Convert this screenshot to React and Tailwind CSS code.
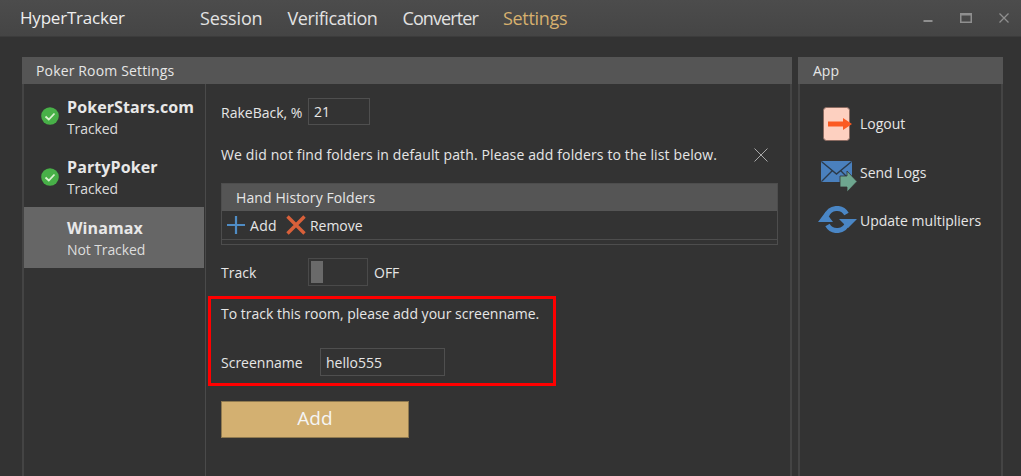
import React from "react";

const font = { fontFamily: '"Open Sans", "Noto Sans", sans-serif' };

function Check() {
  return (
    <svg width="18" height="18" viewBox="0 0 18 18" className="shrink-0">
      <circle cx="9" cy="9" r="8.800" fill="#48b048" />
      <path d="M4.5 9.5 L7.8 12.5 L13.5 6.5" fill="none" stroke="#d9f2d0" strokeWidth="1.8" />
    </svg>
  );
}

function Room({ name, status, tracked, selected, h }) {
  return (
    <div className={`flex items-center ${selected ? "bg-[#666666] w-[180px] h-[61px] pt-[4px]" : "w-full"} ${h || ""}`}>
      <div className="w-[43px] pl-[17px] shrink-0 flex -translate-y-[2px]">
        {tracked && <Check />}
      </div>
      <div className="flex flex-col">
        <span className="text-[16px] leading-[21px] font-bold text-[#e8e8e8] tracking-[0.1px]">{name}</span>
        <span className="text-[14px] leading-[22px] text-[#dddddd] tracking-[-0.1px]">{status}</span>
      </div>
    </div>
  );
}

function ActionRow({ icon, label, h, pad }) {
  return (
    <div className={`flex items-center ${h}`}>
      <div className={`w-[60px] flex justify-end shrink-0 ${pad}`}>{icon}</div>
      <span className="text-[14px] text-[#e6e6e6]">{label}</span>
    </div>
  );
}

export default function App() {
  return (
    <div style={font} className="w-[1021px] h-[476px] bg-[#333333] flex flex-col overflow-hidden">
      <header className="h-[37px] shrink-0 bg-gradient-to-b from-[#4c4c4c] to-[#454545] flex items-center pl-[20px] border-b border-[#3c3c3c]">
        <span className="text-[17px] text-[#eeeeee] w-[180px] tracking-[-0.2px]">HyperTracker</span>
        <nav className="flex gap-[25px] text-[18px] text-[#e2e2e2]">
          <span className="tracking-[-0.15px]">Session</span>
          <span className="tracking-[-0.4px]">Verification</span>
          <span className="tracking-[-0.9px]">Converter</span>
          <span className="text-[#d6b06e] tracking-[-0.3px]">Settings</span>
        </nav>
        <div className="ml-auto flex items-center text-[#8f8f8f]">
          <svg width="10" height="10" viewBox="0 0 10 10" className="mr-[27px] mt-[2px]"><rect x="0.5" y="6" width="9" height="2" fill="#8f8f8f" /></svg>
          <svg width="12" height="10" viewBox="0 0 12 10" className="mr-[27px]"><rect x="0.75" y="0.75" width="10.5" height="8.5" fill="none" stroke="#8f8f8f" strokeWidth="1.5" /><rect x="0" y="0" width="12" height="2.5" fill="#8f8f8f" /></svg>
          <svg width="10" height="10" viewBox="0 0 10 10" className="mr-[12px]"><path d="M0.5 0.5 L9.5 9.5 M9.5 0.5 L0.5 9.5" stroke="#8f8f8f" strokeWidth="1.3" /></svg>
        </div>
      </header>

      <main className="flex-1 flex gap-[6px] pl-[22px] pt-[20px] min-h-0">
        <section className="w-[770px] flex flex-col border-x-2 border-[#444444]">
          <div className="h-[27px] -mx-[2px] bg-[#555555] pl-[14px] flex items-center text-[14px] text-[#e6e6e6] tracking-[0.15px] shrink-0">
            Poker Room Settings
          </div>
          <div className="flex-1 flex min-h-0">
            <div className="w-[181px] shrink-0 border-r border-[#4a4a4a] flex flex-col pt-[4px] box-content">
              <Room name="PokerStars.com" status="Tracked" tracked h="h-[60px]" />
              <Room name="PartyPoker" status="Tracked" tracked h="h-[59px] pt-[2px]" />
              <Room name="Winamax" status="Not Tracked" selected />
            </div>
            <div className="flex-1 flex flex-col pl-[15px] text-[14px] text-[#e6e6e6]">
              <div className="flex items-center mt-[14px] h-[27px]">
                <span className="w-[87px] pt-[1px]">RakeBack, %</span>
                <div className="w-[62px] h-[27px] border border-[#4f4f4f] flex items-center pl-[5px]">21</div>
              </div>
              <div className="flex items-center h-[20px] mt-[20px] w-[547px] justify-between">
                <span className="tracking-[0.13px] -translate-y-[1px]">We did not find folders in default path. Please add folders to the list below.</span>
                <svg width="14" height="14" viewBox="0 0 14 14" className="shrink-0"><path d="M0.5 0.5 L13.5 13.5 M13.5 0.5 L0.5 13.5" stroke="#a8a8a8" strokeWidth="1" /></svg>
              </div>
              <div className="w-[557px] h-[62px] mt-[18px] border border-[#4d4d4d] flex flex-col">
                <div className="h-[27px] bg-[#555555] pl-[14px] flex items-center tracking-[0.1px]">Hand History Folders</div>
                <div className="h-[29px] flex items-center pl-[5px] border-b border-[#4d4d4d]">
                  <svg width="18" height="18" viewBox="0 0 18 18" className="mr-[5px]"><path d="M9 0 V18 M0 9 H18" stroke="#4f8cc4" strokeWidth="2.2" /></svg>
                  <span className="mr-[9px] tracking-[0.3px]">Add</span>
                  <svg width="20" height="20" viewBox="0 0 20 20" className="mr-[4px]"><path d="M1.5 1.5 L18.5 18.5 M18.5 1.5 L1.5 18.5" stroke="#d9603a" strokeWidth="3.4" /></svg>
                  <span>Remove</span>
                </div>
              </div>
              <div className="flex items-center mt-[13px] h-[28px]">
                <span className="w-[87px]">Track</span>
                <div className="w-[60px] h-[28px] border border-[#4a4a4a] p-[2px]">
                  <div className="w-[12px] h-full bg-[#6a6a6a]" />
                </div>
                <span className="ml-[6px]">OFF</span>
              </div>
              <div className="w-[348px] h-[90px] -ml-[13px] mt-[10px] border-[3px] border-[#ff0000] pl-[10px] flex flex-col">
                <span className="mt-[4px] h-[20px] flex items-center">To track this room, please add your screenname.</span>
                <div className="flex items-center mt-[25px]">
                  <span className="w-[99px]">Screenname</span>
                  <div className="w-[125px] h-[28px] border border-[#4f4f4f] flex items-center pl-[5px]">hello555</div>
                </div>
              </div>
              <button className="w-[188px] h-[37px] mt-[15px] pb-[2px] bg-[#d3b071] border border-[#8f7a50] text-[19px] text-[#f5f5f5] flex items-center justify-center">
                Add
              </button>
            </div>
          </div>
        </section>

        <section className="w-[205px] flex flex-col border-x-2 border-[#444444]">
          <div className="h-[27px] -mx-[2px] bg-[#555555] pl-[15px] flex items-center text-[14px] text-[#e6e6e6] shrink-0">App</div>
          <div className="flex flex-col pt-[15px]">
            <ActionRow
              h="h-[49px]"
              pad="pr-[8px]"
              icon={
                <svg width="29" height="34" viewBox="0 0 29 34">
                  <rect x="0.5" y="0.5" width="26" height="33" rx="3" fill="#fdd0c0" stroke="#8a6a60" />
                  <path d="M5 14.500 H20 V11 L29 17 L20 23 V19.500 H5 Z" fill="#fb5a22" />
                </svg>
              }
              label="Logout"
            />
            <ActionRow
              h="h-[48px]"
              pad="pr-[3px] translate-y-[4px]"
              icon={
                <svg width="36" height="31" viewBox="0 0 36 31">
                  <rect x="0" y="0" width="31" height="21" rx="2" fill="#4a80bd" />
                  <path d="M1 1 L15.500 13 L30 1 M1 20 L11 10 M30 20 L20 10" fill="none" stroke="#2c3a4a" strokeWidth="1.400" />
                  <path d="M19 15 H26 V10 L36 20.500 L26 31 V26 H19 Z" fill="#6ea68f" stroke="#333333" strokeWidth="0.8" />
                </svg>
              }
              label="Send Logs"
            />
            <ActionRow
              h="h-[49px]"
              pad="pr-[3px] -translate-y-[1px]"
              icon={
                <svg width="40" height="27" viewBox="0 0 40 27">
                  <path d="M9.500 10 A11 11 0 0 1 29.500 8" fill="none" stroke="#4a86c5" strokeWidth="5" />
                  <path d="M1 16 L16 16 L8.500 6 Z M22 13 L40 13 L31 22 Z" fill="#4a86c5" />
                  <path d="M30.500 17 A11 11 0 0 1 10.500 19" fill="none" stroke="#4a86c5" strokeWidth="5" />
                </svg>
              }
              label="Update multipliers"
            />
          </div>
        </section>
      </main>
    </div>
  );
}
